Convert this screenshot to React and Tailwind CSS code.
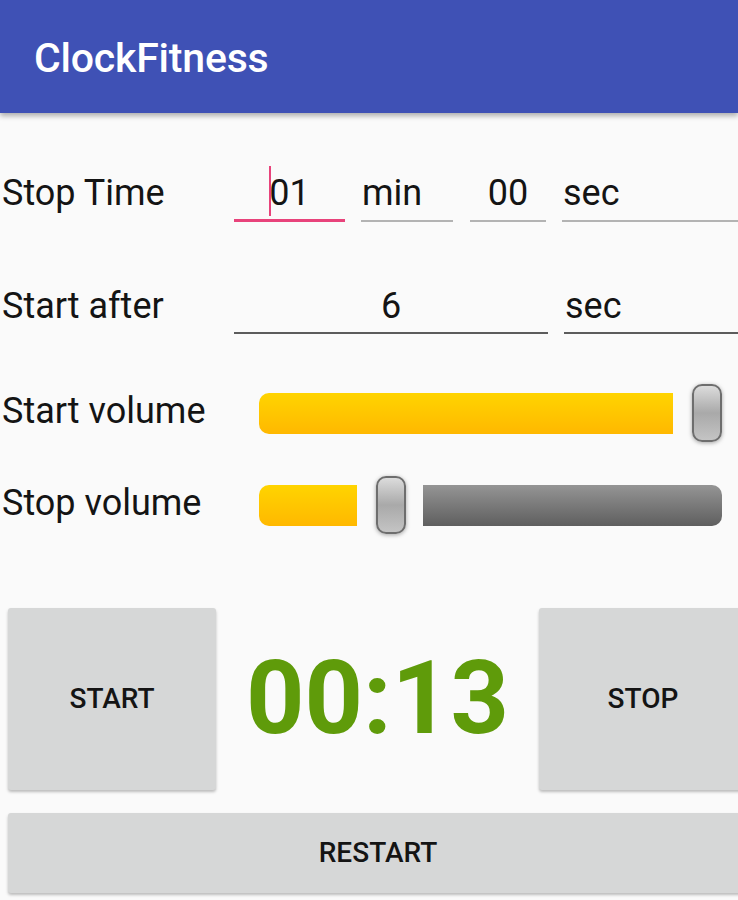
import React from "react";

const font = { fontFamily: "Roboto, 'Noto Sans', sans-serif" };

const Thumb = () => (
  <div className="w-[30px] h-[58px] shrink-0 rounded-[10px] border-2 border-[#6e6e6e] bg-gradient-to-b from-[#dcdcdc] via-[#a9a9a9] to-[#c4c4c4] shadow-[0_1px_4px_rgba(0,0,0,0.35)]" />
);

const App = () => {
  return (
    <div className="w-[738px] h-[900px] overflow-hidden bg-[#fafafa] text-[#141414]" style={font}>
      {/* toolbar */}
      <div className="h-[113px] bg-[#3f51b5] flex items-center pl-[34px] shadow-[0_3px_5px_rgba(0,0,0,0.3)] relative z-10">
        <h1 className="text-[41px] font-medium text-white leading-none tracking-[-0.005em] pt-[3px]">
          ClockFitness
        </h1>
      </div>

      <div className="w-[756px]">
        {/* Stop time */}
        <div className="flex items-start mt-[58px] text-[36px] leading-[44px]">
          <div className="w-[234px] pl-[2px] pb-[5px] border-b-2 border-transparent">Stop Time</div>
          <div className="w-[111px] text-center pb-[4px] border-b-[3px] border-[#e8437b]">
            <span className="relative">
              <span className="absolute left-[0px] top-[-6px] w-[2px] h-[50px] bg-[#e8437b]" />
              01
            </span>
          </div>
          <div className="w-[92px] ml-[16px] pb-[5px] pl-[1px] border-b-2 border-[#b3b3b3]">min</div>
          <div className="w-[76px] ml-[17px] text-center pb-[5px] border-b-2 border-[#b3b3b3]">00</div>
          <div className="flex-1 ml-[16px] pb-[5px] pl-[1px] border-b-2 border-[#b3b3b3]">sec</div>
        </div>

        {/* Start after */}
        <div className="flex items-start mt-[62px] text-[36px] leading-[44px]">
          <div className="w-[234px] pl-[2px] pb-[4px] border-b-2 border-transparent">Start after</div>
          <div className="w-[314px] text-center pb-[4px] border-b-2 border-[#5c5c5c]">6</div>
          <div className="flex-1 ml-[16px] pb-[4px] pl-[1px] border-b-2 border-[#5c5c5c]">sec</div>
        </div>

        {/* Start volume */}
        <div className="flex items-center mt-[50px] h-[58px] text-[36px] leading-[44px]">
          <div className="w-[259px] pl-[2px] pb-[4px]">Start volume</div>
          <div className="w-[414px] h-[41px] rounded-l-[10px] bg-gradient-to-b from-[#ffd400] to-[#ffb800]" />
          <div className="ml-[19px]">
            <Thumb />
          </div>
        </div>

        {/* Stop volume */}
        <div className="flex items-center mt-[34px] h-[58px] text-[36px] leading-[44px]">
          <div className="w-[259px] pl-[2px] pb-[4px]">Stop volume</div>
          <div className="w-[98px] h-[41px] rounded-l-[10px] bg-gradient-to-b from-[#ffd400] to-[#ffb800]" />
          <div className="ml-[19px]">
            <Thumb />
          </div>
          <div className="ml-[17px] w-[299px] h-[41px] rounded-r-[10px] bg-gradient-to-b from-[#959595] to-[#5f5f5f]" />
        </div>

        {/* timer + buttons */}
        <div className="flex items-stretch mt-[74px] pl-[8px] h-[182px]">
          <button className="w-[208px] rounded-[3px] bg-[#d6d7d7] shadow-[0_2px_3px_rgba(0,0,0,0.25)] text-[28px] font-medium">
            START
          </button>
          <div className="w-[323px] flex items-center justify-center text-[#5f9b0a] text-[102px] font-bold leading-none pb-[2px]">
            00:13
          </div>
          <button className="w-[208px] rounded-[3px] bg-[#d6d7d7] shadow-[0_2px_3px_rgba(0,0,0,0.25)] text-[28px] font-medium">
            STOP
          </button>
        </div>

        <div className="pl-[8px] mt-[23px]">
          <button className="w-[740px] h-[80px] rounded-[3px] bg-[#d6d7d7] shadow-[0_2px_3px_rgba(0,0,0,0.25)] text-[28px] font-medium">
            RESTART
          </button>
        </div>
      </div>
    </div>
  );
};

export default App;
